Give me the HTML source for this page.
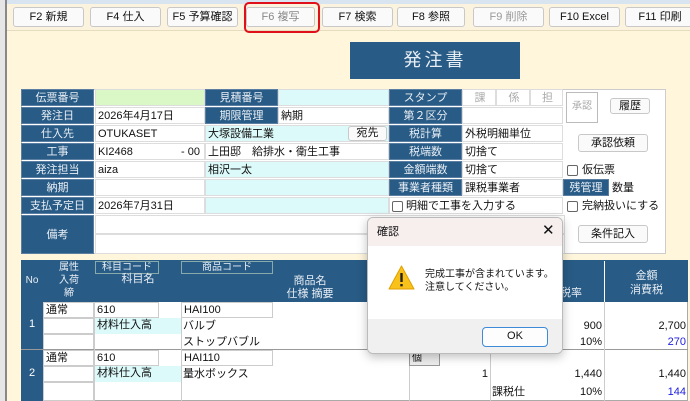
<!DOCTYPE html><html><head><meta charset="utf-8"><style>
*{margin:0;padding:0;box-sizing:border-box}
body{width:690px;height:401px;overflow:hidden;background:#fff6dc;font-family:"Liberation Sans","Noto Sans CJK JP",sans-serif;font-size:11px;color:#111;position:relative}
div{position:absolute}
.b{background:#fafafa;border:1px solid #c8c8c8;border-radius:3px;text-align:center;line-height:18px;font-size:11px}
.l{background:#285b85;color:#e8eef5;text-align:center;font-size:11px;line-height:17px;height:17px;border:1px solid #5a7fa3}
.v{background:#fff;border:1px solid #ddd;line-height:16px;height:17px;padding-left:2px;font-size:11px}
.c{background:#dcfafa;border:1px solid #ddd;line-height:16px;height:17px;padding-left:2px}
.g{background:#fff;border:1px solid #ccc;line-height:15px;padding-left:2px;font-size:11px}
.cb{width:11px;height:11px;border:1px solid #666;border-radius:2px;background:#fff;top:3px}
</style></head><body>
<div style="left:0;top:0;width:690px;height:4px;background:#d8e4f0"></div>
<div style="left:0;top:0;width:7px;height:401px;background:#e6e6e6;border-right:2px solid #888"></div>
<div style="left:7px;top:4px;width:683px;height:27px;background:#fbf3de;border-bottom:1px solid #e5dcc0"></div>
<div class="b" style="left:13px;top:7px;width:71px;height:20px">F2 新規</div>
<div class="b" style="left:90px;top:7px;width:71px;height:20px">F4 仕入</div>
<div class="b" style="left:167px;top:7px;width:71px;height:20px">F5 予算確認</div>
<div class="b" style="left:246px;top:7px;width:69px;height:20px;color:#888">F6 複写</div>
<div style="left:244px;top:2px;width:76px;height:31px;border:2px solid #e0101a;border-radius:5px"></div>
<div class="b" style="left:322px;top:7px;width:71px;height:20px">F7 検索</div>
<div class="b" style="left:397px;top:7px;width:68px;height:20px">F8 参照</div>
<div class="b" style="left:473px;top:7px;width:71px;height:20px;color:#999">F9 削除</div>
<div class="b" style="left:549px;top:7px;width:71px;height:20px">F10 Excel</div>
<div class="b" style="left:625px;top:7px;width:70px;height:20px">F11 印刷</div>
<div style="left:350px;top:42px;width:170px;height:37px;background:#285b85;color:#e8eef5;font-size:18px;text-align:center;line-height:37px;letter-spacing:3px">発注書</div>
<div style="left:21px;top:89px;width:645px;height:165px;background:#fff;border:1px solid #ccc"></div>
<div class="l" style="left:21px;top:89px;width:73px">伝票番号</div>
<div class="l" style="left:21px;top:107px;width:73px">発注日</div>
<div class="l" style="left:21px;top:125px;width:73px">仕入先</div>
<div class="l" style="left:21px;top:143px;width:73px">工事</div>
<div class="l" style="left:21px;top:161px;width:73px">発注担当</div>
<div class="l" style="left:21px;top:179px;width:73px">納期</div>
<div class="l" style="left:21px;top:197px;width:73px">支払予定日</div>
<div class="l" style="left:21px;top:215px;width:73px;height:39px;line-height:38px">備考</div>
<div class="v" style="left:95px;top:89px;width:110px;background:#d9f8c6"></div>
<div class="v" style="left:95px;top:107px;width:110px">2026年4月17日</div>
<div class="v" style="left:95px;top:125px;width:110px">OTUKASET</div>
<div class="v" style="left:95px;top:143px;width:110px">KI2468<span style="position:absolute;right:4px">- 00</span></div>
<div class="v" style="left:95px;top:161px;width:110px">aiza</div>
<div class="v" style="left:95px;top:179px;width:110px"></div>
<div class="v" style="left:95px;top:197px;width:110px">2026年7月31日</div>
<div class="v" style="left:95px;top:215px;width:470px;height:19px"></div>
<div class="v" style="left:95px;top:234px;width:470px;height:20px"></div>
<div class="l" style="left:205px;top:89px;width:73px">見積番号</div>
<div class="l" style="left:205px;top:107px;width:73px">期限管理</div>
<div class="c" style="left:278px;top:89px;width:111px"></div>
<div class="v" style="left:278px;top:107px;width:111px">納期</div>
<div class="c" style="left:205px;top:125px;width:184px">大塚設備工業</div>
<div class="b" style="left:348px;top:126px;width:39px;height:15px;line-height:13px">宛先</div>
<div class="v" style="left:205px;top:143px;width:184px">上田邸　給排水・衛生工事</div>
<div class="c" style="left:205px;top:161px;width:184px">相沢一太</div>
<div class="c" style="left:205px;top:179px;width:184px"></div>
<div class="c" style="left:205px;top:197px;width:184px"></div>
<div class="l" style="left:389px;top:89px;width:73px">スタンプ</div>
<div class="l" style="left:389px;top:107px;width:73px">第２区分</div>
<div class="l" style="left:389px;top:125px;width:73px">税計算</div>
<div class="l" style="left:389px;top:143px;width:73px">税端数</div>
<div class="l" style="left:389px;top:161px;width:73px">金額端数</div>
<div class="l" style="left:389px;top:179px;width:73px">事業者種類</div>
<div class="v" style="left:462px;top:89px;width:34px;color:#aaa;text-align:center">課</div>
<div class="v" style="left:496px;top:89px;width:34px;color:#aaa;text-align:center">係</div>
<div class="v" style="left:530px;top:89px;width:33px;color:#aaa;text-align:center">担</div>
<div class="v" style="left:462px;top:107px;width:101px"></div>
<div class="v" style="left:462px;top:125px;width:101px">外税明細単位</div>
<div class="v" style="left:462px;top:143px;width:101px">切捨て</div>
<div class="v" style="left:462px;top:161px;width:101px">切捨て</div>
<div class="v" style="left:462px;top:179px;width:101px">課税事業者</div>
<div class="v" style="left:389px;top:197px;width:174px;padding-left:16px">明細で工事を入力する</div>
<div class="cb" style="left:392px;top:201px"></div>
<div style="left:566px;top:92px;width:32px;height:31px;border:1px solid #bbb;color:#aaa;font-size:10px;text-align:center;line-height:27px">承認</div>
<div class="b" style="left:610px;top:98px;width:40px;height:16px;line-height:14px">履歴</div>
<div class="b" style="left:578px;top:134px;width:70px;height:18px;line-height:16px">承認依頼</div>
<div class="cb" style="left:567px;top:165px"></div><div style="left:582px;top:162px;line-height:16px">仮伝票</div>
<div class="l" style="left:563px;top:179px;width:46px">残管理</div>
<div style="left:612px;top:180px;line-height:16px">数量</div>
<div class="cb" style="left:567px;top:201px"></div><div style="left:582px;top:198px;line-height:16px">完納扱いにする</div>
<div class="b" style="left:578px;top:225px;width:70px;height:18px;line-height:16px">条件記入</div>
<div style="left:21px;top:260px;width:667px;height:141px;background:#fff;border:1px solid #aaa"></div>
<div style="left:21px;top:260px;width:667px;height:42px;background:#285b85"></div>
<div style="left:21px;top:302px;width:22px;height:99px;background:#285b85"></div>
<div style="left:21px;top:275px;width:22px;color:#e8eef5;text-align:center;font-size:10px">No</div>
<div style="left:44px;top:261px;width:50px;color:#e8eef5;text-align:center;line-height:13px;font-size:10px">属性<br>入荷<br>締</div>
<div style="left:95px;top:261px;width:64px;height:13px;border:1px solid #8aa;color:#e8eef5;text-align:center;line-height:11px;font-size:10px">科目コード</div>
<div style="left:95px;top:273px;width:86px;color:#e8eef5;text-align:center;line-height:13px">科目名</div>
<div style="left:181px;top:261px;width:92px;height:13px;border:1px solid #8aa;color:#e8eef5;text-align:center;line-height:11px;font-size:10px">商品コード</div>
<div style="left:250px;top:275px;width:120px;color:#e8eef5;text-align:center;line-height:13px">商品名<br>仕様 摘要</div>
<div style="left:560px;top:286px;color:#e8eef5;line-height:14px">税率</div>
<div style="left:604px;top:261px;width:84px;height:41px;border-left:1px solid #fff;color:#e8eef5;text-align:center;line-height:14px;padding-top:8px">金額<br>消費税</div>
<div style="left:21px;top:318px;width:22px;color:#fff;text-align:center">1</div>
<div style="left:21px;top:367px;width:22px;color:#fff;text-align:center">2</div>
<div class="g" style="left:43px;top:302px;width:51px;height:16px">通常</div>
<div class="g" style="left:43px;top:318px;width:51px;height:16px"></div>
<div class="g" style="left:43px;top:334px;width:51px;height:16px"></div>
<div class="g" style="left:94px;top:302px;width:65px;height:16px">610</div>
<div style="left:95px;top:318px;width:86px;height:16px;background:#dcfafa;padding-left:2px;line-height:15px">材料仕入高</div>
<div class="g" style="left:181px;top:302px;width:92px;height:16px">HAI100</div>
<div style="left:183px;top:318px;line-height:16px">バルブ</div>
<div style="left:183px;top:334px;line-height:16px">ストップバブル</div>
<div style="left:21px;top:349px;width:667px;border-top:1px solid #999"></div>
<div class="g" style="left:43px;top:350px;width:51px;height:16px">通常</div>
<div class="g" style="left:43px;top:366px;width:51px;height:16px"></div>
<div class="g" style="left:43px;top:382px;width:51px;height:19px"></div>
<div class="g" style="left:94px;top:350px;width:65px;height:16px">610</div>
<div style="left:95px;top:366px;width:86px;height:16px;background:#dcfafa;padding-left:2px;line-height:15px">材料仕入高</div>
<div class="g" style="left:181px;top:350px;width:92px;height:16px">HAI110</div>
<div style="left:183px;top:366px;line-height:16px">量水ボックス</div>
<div style="left:181px;top:302px;height:99px;border-left:1px solid #ccc"></div>
<div style="left:94px;top:302px;height:99px;border-left:1px solid #ccc"></div>
<div style="left:409px;top:350px;height:51px;border-left:1px solid #ccc"></div>
<div style="left:490px;top:350px;height:51px;border-left:1px solid #ccc"></div>
<div style="left:604px;top:302px;height:99px;border-left:1px solid #ccc"></div>
<div style="left:409px;top:351px;width:31px;height:15px;border:1px solid #999;background:#eee;font-size:10px;line-height:13px;padding-left:2px">個</div>
<div style="left:470px;top:366px;width:18px;text-align:right;line-height:16px">1</div>
<div style="left:540px;top:318px;width:62px;text-align:right;line-height:16px">900</div>
<div style="left:540px;top:334px;width:62px;text-align:right;line-height:16px">10%</div>
<div style="left:540px;top:366px;width:62px;text-align:right;line-height:16px">1,440</div>
<div style="left:540px;top:384px;width:62px;text-align:right;line-height:16px">10%</div>
<div style="left:492px;top:384px;line-height:16px">課税仕</div>
<div style="left:610px;top:318px;width:76px;text-align:right;line-height:16px">2,700</div>
<div style="left:610px;top:334px;width:76px;text-align:right;line-height:16px;color:#2020e0">270</div>
<div style="left:610px;top:366px;width:76px;text-align:right;line-height:16px">1,440</div>
<div style="left:610px;top:384px;width:76px;text-align:right;line-height:16px;color:#2020e0">144</div>
<div style="left:367px;top:217px;width:196px;height:137px;background:#fff;border:1px solid #bbb;border-radius:6px;box-shadow:0 3px 10px rgba(0,0,0,.25);overflow:hidden">
<div style="left:0;top:0;width:196px;height:28px;background:#f7eeee;line-height:28px;padding-left:9px;font-size:11px">確認</div>
<div style="left:174px;top:4px;font-size:15px;line-height:18px">✕</div>
<svg style="position:absolute;left:20px;top:47px" width="27" height="25" viewBox="0 0 27 25"><path d="M13.5 1 L26 24 L1 24 Z" fill="#f8c21a" stroke="#e0a000" stroke-linejoin="round"/><rect x="12.3" y="8" width="2.4" height="9" fill="#222"/><rect x="12.3" y="19" width="2.4" height="2.4" fill="#222"/></svg>
<div style="left:57px;top:50px;font-size:10px;line-height:13px">完成工事が含まれています。<br>注意してください。</div>
<div style="left:0;top:101px;width:196px;height:36px;background:#f0f0f0"></div>
<div style="left:114px;top:109px;width:66px;height:20px;background:#fdfdfd;border:1.5px solid #3d8bd8;border-radius:4px;text-align:center;line-height:17px;font-size:11px">OK</div>
</div>
</body></html>
